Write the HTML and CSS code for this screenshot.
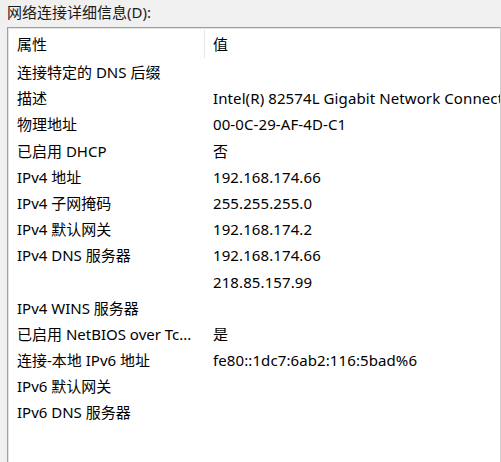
FILE: index.html
```html
<!DOCTYPE html>
<html lang="zh-CN">
<head>
<meta charset="utf-8">
<link rel="stylesheet" href="styles.css">
</head>
<body>
<div class="title">网络连接详细信息(D):</div>
<div class="listbox">
  <div class="header">
    <div class="hcell first">属性</div>
    <div class="hcell second">值</div>
  </div>
  <div class="rows">
    <div class="row"><div class="prop">连接特定的 DNS 后缀</div><div class="val"></div></div>
    <div class="row"><div class="prop">描述</div><div class="val">Intel(R) 82574L Gigabit Network Connection</div></div>
    <div class="row"><div class="prop">物理地址</div><div class="val">00-0C-29-AF-4D-C1</div></div>
    <div class="row"><div class="prop">已启用 DHCP</div><div class="val">否</div></div>
    <div class="row"><div class="prop">IPv4 地址</div><div class="val">192.168.174.66</div></div>
    <div class="row"><div class="prop">IPv4 子网掩码</div><div class="val">255.255.255.0</div></div>
    <div class="row"><div class="prop">IPv4 默认网关</div><div class="val">192.168.174.2</div></div>
    <div class="row"><div class="prop">IPv4 DNS 服务器</div><div class="val">192.168.174.66</div></div>
    <div class="row"><div class="prop"></div><div class="val">218.85.157.99</div></div>
    <div class="row"><div class="prop">IPv4 WINS 服务器</div><div class="val"></div></div>
    <div class="row"><div class="prop">已启用 NetBIOS over Tc...</div><div class="val">是</div></div>
    <div class="row"><div class="prop">连接-本地 IPv6 地址</div><div class="val">fe80::1dc7:6ab2:116:5bad%6</div></div>
    <div class="row"><div class="prop">IPv6 默认网关</div><div class="val"></div></div>
    <div class="row"><div class="prop">IPv6 DNS 服务器</div><div class="val"></div></div>
  </div>
</div>
</body>
</html>
```

FILE: styles.css
```css
html, body {
  margin: 0;
  padding: 0;
  background: #f0f0f0;
  overflow: hidden;
}
body {
  font-family: "Noto Sans", "Noto Sans CJK SC", sans-serif;
  font-size: 15px;
  color: #000;
  width: 501px;
  height: 462px;
}
.title {
  height: 27px;
  line-height: 24px;
  padding-left: 7px;
  color: #1a1a1a;
}
.listbox {
  margin-left: 7px;
  width: 492px;
  height: 440px;
  background: #fff;
  border-top: 1px solid #a0a0a0;
  border-left: 1px solid #a0a0a0;
  border-right: 1px solid #d0d0d0;
  box-shadow: inset 1px 1px 0 #e3e3e3;
  overflow: hidden;
}
.header {
  display: flex;
  height: 31px;
  align-items: center;
}
.hcell {
  line-height: 28px;
  white-space: nowrap;
}
.hcell.first {
  width: 187px;
  padding-left: 9px;
  border-right: 1px solid #e5e5e5;
}
.hcell.second {
  padding-left: 8px;
}
.row {
  display: flex;
  height: 26.2px;
  line-height: 26px;
  white-space: nowrap;
}
.prop {
  width: 188px;
  padding-left: 9px;
  flex-shrink: 0;
  overflow: hidden;
}
.val {
  padding-left: 8px;
  overflow: hidden;
  letter-spacing: 0.1px;
}
```
